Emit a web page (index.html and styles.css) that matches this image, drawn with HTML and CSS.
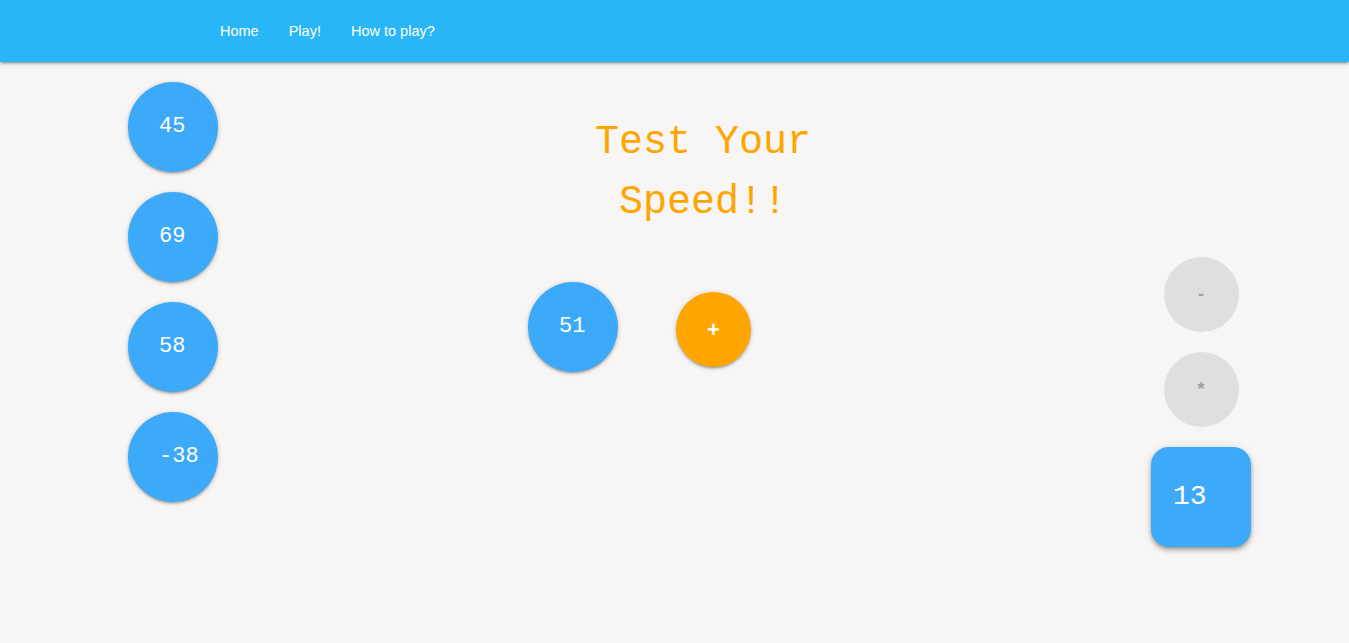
FILE: index.html
```html
<!DOCTYPE html>
<html lang="en">
<head>
<meta charset="utf-8">
<title>Test Your Speed</title>
<link rel="stylesheet" href="styles.css">
</head>
<body>
<nav class="nav">
  <ul class="nav-links">
    <li><a href="#">Home</a></li>
    <li><a href="#">Play!</a></li>
    <li><a href="#">How to play?</a></li>
  </ul>
</nav>
<main class="main">
  <div class="col-left">
    <div class="num">45</div>
    <div class="num">69</div>
    <div class="num">58</div>
    <div class="num">-38</div>
  </div>
  <div class="col-center">
    <h1 class="title">Test Your Speed!!</h1>
    <div class="play-row">
      <div class="num">51</div>
      <div class="op op-active">+</div>
    </div>
  </div>
  <div class="col-right">
    <div class="op op-disabled">-</div>
    <div class="op op-disabled">*</div>
    <div class="target">13</div>
  </div>
</main>
</body>
</html>
```
FILE: styles.css
```css
html, body {
  margin: 0;
  padding: 0;
}
body {
  background: #f7f6f5;
  font-family: "Liberation Sans", Arial, sans-serif;
  min-height: 643px;
}
.nav {
  height: 62px;
  background: #29b6f6;
  box-shadow: 0 2px 2px 0 rgba(0,0,0,.14), 0 3px 1px -2px rgba(0,0,0,.12), 0 1px 5px 0 rgba(0,0,0,.2);
  position: relative;
  z-index: 2;
}
.nav-links {
  list-style: none;
  margin: 0;
  padding: 0 0 0 205px;
  display: flex;
  height: 62px;
  align-items: center;
}
.nav-links a {
  display: block;
  padding: 0 15px;
  color: #fff;
  text-decoration: none;
  font-size: 14.5px;
  line-height: 62px;
}
.main {
  display: flex;
  align-items: flex-start;
  padding-top: 20px;
}
.col-left {
  margin-left: 128px;
  width: 90px;
  display: flex;
  flex-direction: column;
  gap: 20px;
}
.num {
  width: 90px;
  height: 90px;
  border-radius: 50%;
  background: #3da9f9;
  color: #fff;
  font-family: "Courier New", Courier, "Nimbus Mono PS", "FreeMono", "Liberation Mono", monospace;
  font-size: 22px;
  line-height: 90px;
  padding-left: 31px;
  box-sizing: border-box;
  box-shadow: 0 2px 2px 0 rgba(0,0,0,.14), 0 3px 1px -2px rgba(0,0,0,.12), 0 1px 5px 0 rgba(0,0,0,.2);
}
.col-center {
  margin-left: 245px;
  width: 480px;
}
.title {
  margin: 31px auto 0;
  width: 300px;
  text-align: center;
  font-family: "Courier New", Courier, "Nimbus Mono PS", "FreeMono", "Liberation Mono", monospace;
  font-weight: normal;
  font-size: 40px;
  line-height: 60px;
  color: #ffa500;
}
.play-row {
  display: flex;
  align-items: flex-start;
  gap: 58px;
  padding-left: 65px;
  margin-top: 49px;
}
.op {
  width: 75px;
  height: 75px;
  border-radius: 50%;
  display: flex;
  align-items: center;
  justify-content: center;
}
.op-active {
  margin-top: 10px;
  background: #ffa500;
  color: #fff;
  font-size: 22px;
  font-weight: bold;
  box-shadow: 0 2px 2px 0 rgba(0,0,0,.14), 0 3px 1px -2px rgba(0,0,0,.12), 0 1px 5px 0 rgba(0,0,0,.2);
}
.op-disabled {
  background: #dfdfdf;
  color: #9f9f9f;
  font-size: 18px;
  font-weight: bold;
}
.col-right {
  margin-left: 208px;
  width: 100px;
  padding-top: 175px;
  display: flex;
  flex-direction: column;
  align-items: center;
  gap: 20px;
}
.target {
  width: 100px;
  height: 100px;
  border-radius: 18px;
  background: #3da9f9;
  color: #fff;
  font-family: "Courier New", Courier, "Nimbus Mono PS", "FreeMono", "Liberation Mono", monospace;
  font-size: 28px;
  line-height: 100px;
  padding-left: 22px;
  box-sizing: border-box;
  box-shadow: 0 4px 5px 0 rgba(0,0,0,.14), 0 1px 10px 0 rgba(0,0,0,.12), 0 2px 4px -1px rgba(0,0,0,.3);
}
```
